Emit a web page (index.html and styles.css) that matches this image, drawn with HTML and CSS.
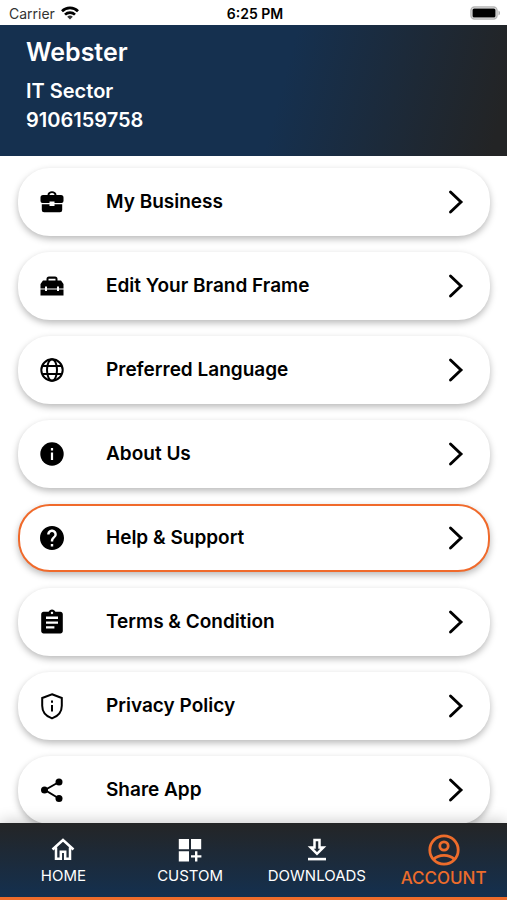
FILE: index.html
```html
<!DOCTYPE html>
<html lang="en">
<head>
<meta charset="utf-8">
<meta name="viewport" content="width=device-width, initial-scale=1">
<title>Account</title>
<link rel="stylesheet" href="styles.css">
</head>
<body>
<svg class="defs" aria-hidden="true">
  <symbol id="chevron" viewBox="0 0 16 26"><path d="M2.500 3 13 13 2.500 23" fill="none" stroke="currentColor" stroke-width="2.900" stroke-linecap="round" stroke-linejoin="miter"/></symbol>
</svg>
<div class="status">
  <div class="carrier"><span>Carrier</span>
    <svg width="18" height="14" viewBox="0 0 18 14" aria-hidden="true"><g fill="none" stroke="#000" stroke-width="2.700"><path d="M1 5.200a11.400 11.400 0 0 1 16 0"/><path d="M4 8.600a7.200 7.200 0 0 1 10 0"/></g><path d="M9 13.600 6.200 10.800a4 4 0 0 1 5.600 0z"/></svg>
  </div>
  <div class="time">6:25 PM</div>
  <svg class="battery" width="31" height="14" viewBox="0 0 31 14" aria-hidden="true"><rect x="1" y="1" width="26" height="12" rx="3.500" fill="#fff" stroke="#b5b5b5" stroke-width="1.500"/><rect x="2.500" y="2.500" width="23" height="9" rx="1.500"/><path d="M28.500 4.500c2 1 2 4 0 5z" fill="#aaa"/></svg>
</div>
<header class="profile">
  <h1>Webster</h1>
  <p>IT Sector</p>
  <p>9106159758</p>
</header>
<main class="menu">
  <button class="card" type="button">
    <svg class="icon" viewBox="0 0 24 24"><path fill-rule="evenodd" d="M7.500 5C7.500 0 16.500 0 16.500 5H21a2.500 2.500 0 0 1 2.500 2.500V11a2 2 0 0 1-2 2H14.500v-1.500h-5V13h-7a2 2 0 0 1-2-2V7.500A2.500 2.500 0 0 1 3 5zM9.500 5h5c0-2.700-5-2.700-5 0zM1.800 14.200h7.700V16h5v-1.800h7.700V20a2.300 2.300 0 0 1-2.300 2.300H4.100A2.300 2.300 0 0 1 1.800 20z"/></svg>
    <span>My Business</span><svg class="chevron"><use href="#chevron"/></svg>
  </button>
  <button class="card" type="button">
    <svg class="icon" viewBox="0 0 24 24"><path fill-rule="evenodd" d="M6.500 6.500V5A2.500 2.500 0 0 1 9 2.500h6A2.500 2.500 0 0 1 17.500 5v1.500H21L23.500 10v4.500H19v-2h-2v2H7v-2H5v2H.5V10L3 6.500zM8.500 6.500h7V4.800h-7zM.5 15.500H5V17h2v-1.500h10V17h2v-1.500h4.500v6H.5z"/></svg>
    <span>Edit Your Brand Frame</span><svg class="chevron"><use href="#chevron"/></svg>
  </button>
  <button class="card" type="button">
    <svg class="icon" viewBox="0 0 24 24"><g fill="none" stroke="currentColor" stroke-width="2"><circle cx="12" cy="12" r="10.700"/><ellipse cx="12" cy="12" rx="5" ry="10.700"/><path d="M2.300 8h19.400M2.300 16h19.400"/></g></svg>
    <span>Preferred Language</span><svg class="chevron"><use href="#chevron"/></svg>
  </button>
  <button class="card" type="button">
    <svg class="icon" viewBox="0 0 24 24"><circle cx="12" cy="12" r="11.700"/><path fill="#fff" d="M10.900 6h2.200v2.400h-2.200zM10.900 10.500h2.200v7.500h-2.200z"/></svg>
    <span>About Us</span><svg class="chevron"><use href="#chevron"/></svg>
  </button>
  <button class="card active" type="button">
    <svg class="icon" viewBox="2 2 20 20"><path d="M12 2C6.480 2 2 6.480 2 12s4.480 10 10 10 10-4.480 10-10S17.520 2 12 2zm1 17h-2v-2h2v2zm2.070-7.750-.9.920C13.450 12.900 13 13.500 13 15h-2v-.5c0-1.100.45-2.100 1.170-2.830l1.240-1.260c.37-.36.59-.86.590-1.410 0-1.100-.9-2-2-2s-2 .9-2 2H8c0-2.210 1.790-4 4-4s4 1.790 4 4c0 .88-.36 1.680-.93 2.250z"/></svg>
    <span>Help &amp; Support</span><svg class="chevron"><use href="#chevron"/></svg>
  </button>
  <button class="card" type="button">
    <svg class="icon" viewBox="2 1.500 20 20"><path d="M19 3h-4.180C14.400 1.840 13.300 1 12 1c-1.300 0-2.400.84-2.820 2H5c-1.100 0-2 .9-2 2v14c0 1.100.9 2 2 2h14c1.100 0 2-.9 2-2V5c0-1.100-.9-2-2-2zm-7 0c.55 0 1 .45 1 1s-.45 1-1 1-1-.45-1-1 .45-1 1-1zm2 14H7v-2h7v2zm3-4H7v-2h10v2zm0-4H7V7h10v2z"/></svg>
    <span>Terms &amp; Condition</span><svg class="chevron"><use href="#chevron"/></svg>
  </button>
  <button class="card" type="button">
    <svg class="icon" viewBox="0 0 24 24"><path d="M12 .2 21.800 4v7.800c0 6-4 10.600-9.800 12.600-5.800-2-9.800-6.600-9.800-12.600V4z" fill="none" stroke="currentColor" stroke-width="2"/><path d="M11 6.500h2v2.200h-2zM11 11h2v6.500h-2z"/></svg>
    <span>Privacy Policy</span><svg class="chevron"><use href="#chevron"/></svg>
  </button>
  <button class="card" type="button">
    <svg class="icon" viewBox="0 0 24 24"><path d="M19 4 5 12l14 8.500" fill="none" stroke="currentColor" stroke-width="2"/><circle cx="19" cy="4" r="3.500"/><circle cx="4.500" cy="12" r="3.500"/><circle cx="19" cy="20.500" r="3.500"/></svg>
    <span>Share App</span><svg class="chevron"><use href="#chevron"/></svg>
  </button>
</main>
<nav class="tabs">
  <a href="#home"><svg class="tab-icon" viewBox="0 0 24 24"><path d="M1.500 11.500 12 2l10.500 9.500M5 9.500v11.300h4.800v-7h4.400v7H19V9.500" fill="none" stroke="currentColor" stroke-width="2.500"/></svg><span>HOME</span></a>
  <a href="#custom"><svg class="tab-icon" viewBox="0 0 24 24"><path d="M.8 1h10.200v10.200H.8zM13 1h10.200v10.200H13zM.8 13.200h10.200v10.200H.8zM17 13.200h2.400v4h4v2.400h-4v4H17v-4h-4v-2.400h4z"/></svg><span>CUSTOM</span></a>
  <a href="#downloads"><svg class="tab-icon" viewBox="0 0 24 24"><path d="M9.500 2h5v7.500h3.800L12 15.800 5.700 9.500h3.800z" fill="none" stroke="currentColor" stroke-width="2.500"/><path d="M3 19.800h18v2.600H3z"/></svg><span>DOWNLOADS</span></a>
  <a href="#account" class="current" aria-current="page"><svg class="tab-icon" viewBox="0 0 32 32"><g fill="none" stroke="currentColor" stroke-width="2.800"><circle cx="16" cy="16" r="14.200"/><circle cx="16" cy="12" r="4.200"/><path d="M5.500 25.500c5-5.500 16-5.500 21 0"/></g></svg><span>ACCOUNT</span></a>
</nav>
</body>
</html>
```
FILE: styles.css
```css
* { box-sizing: border-box; }
body {
  margin: 0;
  height: 100vh;
  display: flex;
  flex-direction: column;
  overflow: hidden;
  background: #fff;
  color: #000;
  font-family: Inter, "Liberation Sans", sans-serif;
}
.defs { position: absolute; width: 0; height: 0; }
svg { flex: none; fill: currentColor; }

.status {
  flex: none;
  display: grid;
  grid-template-columns: 1fr auto 1fr;
  align-items: center;
  height: 25px;
  padding: 2px 6px 0 9px;
  font-size: 14px;
  line-height: 20px;
}
.carrier { display: flex; align-items: center; gap: 6px; color: #333; }
.carrier svg { margin-bottom: 2px; }
.time { font-weight: 600; }
.battery { justify-self: end; margin-bottom: 2px; }

.profile {
  flex: none;
  height: 131px;
  padding: 11px 26px;
  color: #fff;
  background: linear-gradient(105deg, #15304f 55%, #232425 97%);
}
h1 { margin: 0 0 8px; font-size: 25px; line-height: 33px; font-weight: 600; }
.profile p { margin: 0; font-size: 20px; line-height: 29px; font-weight: 600; }

.menu {
  flex: 1;
  min-height: 0;
  overflow: hidden;
  display: flex;
  flex-direction: column;
  gap: 16px;
  padding: 12px 17px 0 18px;
}
.card {
  flex: none;
  display: flex;
  align-items: center;
  height: 68px;
  padding: 0 24px 0 20px;
  border: 2px solid #fff;
  border-radius: 32px;
  background: #fff;
  color: #000;
  box-shadow: 0 3px 7px rgba(0, 0, 0, 0.28);
  font: 600 19px/24px Inter, "Liberation Sans", sans-serif;
  text-align: left;
}
.card.active { border-color: #f06a2b; }
.card span { flex: 1; }
.icon { width: 24px; height: 24px; margin-right: 42px; overflow: visible; }
.chevron { width: 16px; height: 26px; }

.tabs {
  position: relative;
  flex: none;
  display: grid;
  grid-template-columns: repeat(4, 1fr);
  height: 77px;
  border-bottom: 3px solid #ed6c2b;
  background: linear-gradient(#242526, #14304f);
  box-shadow: 0 -2px 14px rgba(0, 0, 0, 0.2);
}
.tabs a {
  display: flex;
  flex-direction: column;
  align-items: center;
  gap: 4px;
  padding-top: 15px;
  color: #fff;
  font-size: 15px;
  line-height: 20px;
  text-decoration: none;
}
.tab-icon { width: 24px; height: 24px; }
.tabs .current { padding-top: 11px; color: #ed6c2b; font-size: 17px; font-weight: 500; }
.current .tab-icon { width: 32px; height: 32px; }
.current span { line-height: 16px; }
```
